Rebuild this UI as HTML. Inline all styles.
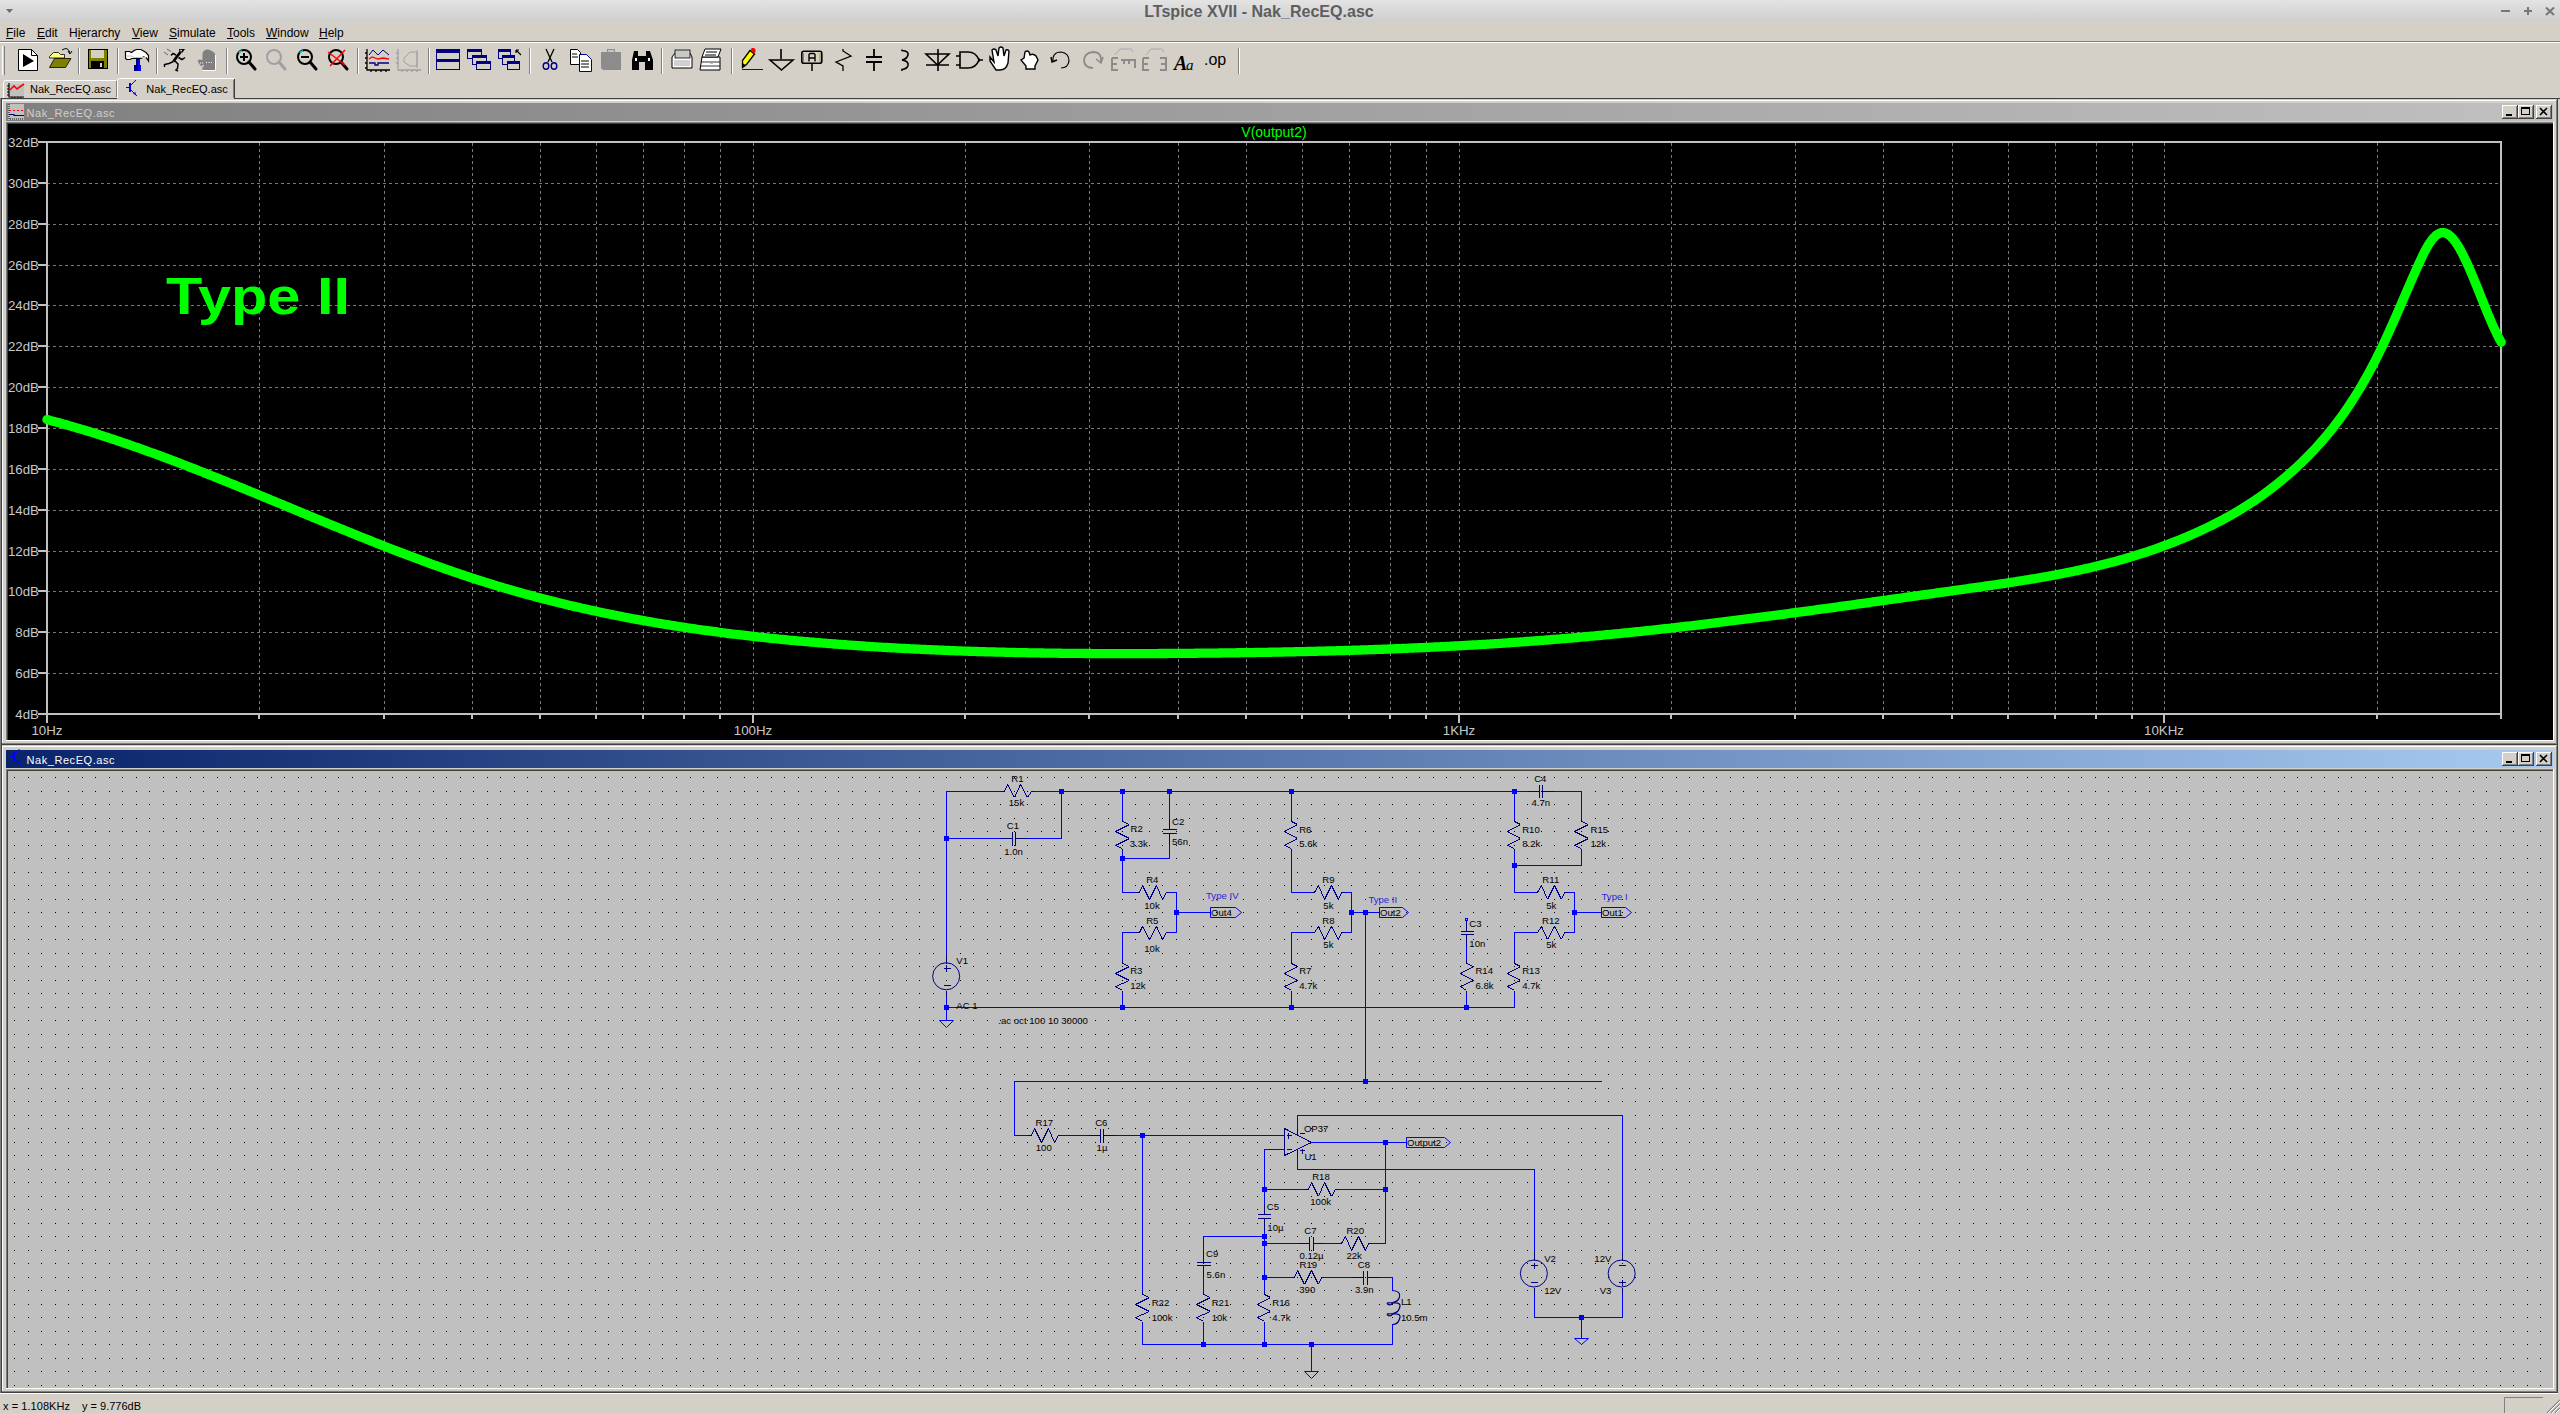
<!DOCTYPE html><html><head><meta charset="utf-8"><title>LTspice XVII - Nak_RecEQ.asc</title><style>
html,body{margin:0;padding:0;width:2560px;height:1413px;overflow:hidden;background:#d4d0c8;font-family:"Liberation Sans", sans-serif;}
.a{position:absolute;}
.mi{position:absolute;top:26px;font-size:12px;color:#000;white-space:nowrap;}
</style></head><body>
<div class="a" style="left:0;top:0;width:2560px;height:22px;background:linear-gradient(#e3e3e3,#cecece);"></div>
<div class="mi" style="left:6px;"><u>F</u>ile</div>
<div class="mi" style="left:37px;"><u>E</u>dit</div>
<div class="mi" style="left:69px;">H<u>i</u>erarchy</div>
<div class="mi" style="left:132px;"><u>V</u>iew</div>
<div class="mi" style="left:169px;"><u>S</u>imulate</div>
<div class="mi" style="left:227px;"><u>T</u>ools</div>
<div class="mi" style="left:266px;"><u>W</u>indow</div>
<div class="mi" style="left:319px;"><u>H</u>elp</div>
<svg class="a" style="left:0;top:0;" width="2560" height="1413" font-family="Liberation Sans, sans-serif">
<path d="M6,9 L13,9 L9.5,13 Z" fill="#6c6c6c"/><text x="1144.2" y="16.8" font-size="16.5" font-weight="bold" fill="#5e5e5e" textLength="229.6" lengthAdjust="spacingAndGlyphs">LTspice XVII - Nak_RecEQ.asc</text><rect x="2501" y="10" width="9" height="2" fill="#777"/><rect x="2524" y="10" width="8" height="2" fill="#777"/><rect x="2527" y="7" width="2" height="8" fill="#777"/><path d="M2546,7.5 L2554,15 M2554,7.5 L2546,15" stroke="#777" stroke-width="2"/><rect x="0" y="41" width="2560" height="1" fill="#808080"/><rect x="0" y="42" width="2560" height="1" fill="#ffffff"/><rect x="2" y="46" width="1" height="29" fill="#fff"/><rect x="4" y="46" width="1" height="29" fill="#808080"/><rect x="78" y="48" width="1" height="26" fill="#808080"/><rect x="79" y="48" width="1" height="26" fill="#fff"/><rect x="117" y="48" width="1" height="26" fill="#808080"/><rect x="118" y="48" width="1" height="26" fill="#fff"/><rect x="156" y="48" width="1" height="26" fill="#808080"/><rect x="157" y="48" width="1" height="26" fill="#fff"/><rect x="226" y="48" width="1" height="26" fill="#808080"/><rect x="227" y="48" width="1" height="26" fill="#fff"/><rect x="357" y="48" width="1" height="26" fill="#808080"/><rect x="358" y="48" width="1" height="26" fill="#fff"/><rect x="428" y="48" width="1" height="26" fill="#808080"/><rect x="429" y="48" width="1" height="26" fill="#fff"/><rect x="529" y="48" width="1" height="26" fill="#808080"/><rect x="530" y="48" width="1" height="26" fill="#fff"/><rect x="661" y="48" width="1" height="26" fill="#808080"/><rect x="662" y="48" width="1" height="26" fill="#fff"/><rect x="731" y="48" width="1" height="26" fill="#808080"/><rect x="732" y="48" width="1" height="26" fill="#fff"/><rect x="1238" y="48" width="1" height="26" fill="#808080"/><rect x="1239" y="48" width="1" height="26" fill="#fff"/><path d="M18.5,49.5 H31.5 L37.5,55.5 V70.5 H18.5 Z" fill="#fff" stroke="#000"/><path d="M31.5,49.5 V55.5 H37.5" fill="none" stroke="#000"/><path d="M23,54 L34,61 L23,67 Z" fill="#000"/><path d="M49.5,56.5 L53.5,52.5 H58.5 L60.5,54.5 H64.5 V58 H49.5 Z" fill="#ffff80" stroke="#000" stroke-width="0.8"/><path d="M49.5,67.5 L54.5,58.5 H71 L65.5,67.5 Z" fill="#808000" stroke="#000" stroke-width="0.8"/><path d="M62,50 Q68,46 70,53 M68,51 L70,54 L72,51" fill="none" stroke="#000" stroke-width="1"/><rect x="88.5" y="49.5" width="19" height="19" fill="#808000" stroke="#000"/><rect x="91" y="50" width="13" height="8" fill="#d4d0c8"/><rect x="91" y="61" width="13" height="7" fill="#000"/><rect x="100" y="63" width="2" height="4" fill="#d4d0c8"/><path d="M125.5,51.5 H129.5 L131.5,52.5 L134,50.5 L136.5,49.5 H141 L146,52.5 L148.5,55.5 V61 L146.5,58 L143.5,57 L141,58.5 H132 L130,59.5 H126.5 L125.5,58 Z" fill="#fff" stroke="#000" stroke-width="1.2"/><path d="M127,56 H132 L134,57.5 H146" stroke="#c0c0c0" fill="none"/><rect x="136" y="59" width="2" height="7" fill="#000080"/><rect x="138" y="59" width="2" height="7" fill="#0000ff"/><rect x="134" y="65" width="4" height="6" fill="#000080"/><rect x="138" y="65" width="3" height="6" fill="#0000ff"/><path d="M180.5,52 L177,56.5 L173.5,61.5" stroke="#000" stroke-width="2.8" fill="none"/><path d="M176,55 L173,53.5 L171,55.5 M178.5,57.5 L182,59.5 L185,57.5 M173.5,61.5 L169,63.5 L164.5,64.5 V67 M175,61 L178,64 L177.5,68.5 L176,70 L178,71" stroke="#000" stroke-width="1.5" fill="none"/><path d="M179,49 H185 L182.5,52.5 H179.5 Z" fill="#000"/><rect x="180.3" y="49.8" width="1.5" height="1.5" fill="#fff"/><path d="M167,49 L171,51.5 M164,52 L168,55" stroke="#808080" stroke-width="1.1" fill="none"/><path d="M202.5,53 Q204,49.5 207,49.5 Q211,49.5 214.5,53 L215.5,55 V70.5 H202.5 V67 L200,65 L197.5,61 L199,59.5 L202.5,60 Z" fill="#808080"/><path d="M215.5,55 V70.5 H202.5" stroke="#fff" fill="none"/><path d="M200,63 h1 M202,63 h1 M206,62.5 h1 M208.5,62.5 h1 M211,62.5 h1 M202,66 h2" stroke="#fff"/><circle cx="244" cy="57" r="7" fill="none" stroke="#000" stroke-width="2"/><path d="M249,62 L255,69" stroke="#000" stroke-width="3" stroke-linecap="round"/><path d="M240,57 H248 M244,53 V61" stroke="#000" stroke-width="2"/><path d="M239,53 Q240,51 242,51" stroke="#00e0e0" stroke-width="1.5" fill="none"/><circle cx="274" cy="57" r="7" fill="none" stroke="#a0a0a0" stroke-width="2"/><path d="M279,62 L285,69" stroke="#a0a0a0" stroke-width="3" stroke-linecap="round"/><circle cx="305" cy="57" r="7" fill="none" stroke="#000" stroke-width="2"/><path d="M310,62 L316,69" stroke="#000" stroke-width="3" stroke-linecap="round"/><path d="M301,57 H309" stroke="#000" stroke-width="2"/><path d="M300,53 Q301,51 303,51" stroke="#00e0e0" stroke-width="1.5" fill="none"/><circle cx="336" cy="57" r="7" fill="none" stroke="#000" stroke-width="2"/><path d="M341,62 L347,69" stroke="#000" stroke-width="3" stroke-linecap="round"/><path d="M328,52 L345,65 M345,50 L330,66" stroke="#ff0000" stroke-width="1.5"/><path d="M367,49 V70 H390 M365,53 H367 M365,58 H367 M365,63 H367 M365,68 H367 M371,70 V72 M376,70 V72 M381,70 V72 M386,70 V72" stroke="#000" stroke-width="1.3" fill="none"/><path d="M369,55 L373,50 L378,55 L383,50 L389,55" stroke="#000080" fill="none"/><path d="M369,59 L372,57 L378,59 L383,58 L389,59" stroke="#f00" fill="none" stroke-width="1.3"/><path d="M369,63 H375 V65 H378 V63 H389" stroke="#000080" fill="none" stroke-width="1.3"/><path d="M398,49 V70 H421 M396,53 H398 M396,58 H398 M396,63 H398 M402,70 V72 M407,70 V72 M412,70 V72 M417,70 V72" stroke="#a0a0a0" stroke-width="1.3" fill="none"/><path d="M404,58 L410,52 H417 V66 L410,66 L404,62 Z M417,50 V68" stroke="#a0a0a0" fill="none"/><rect x="436.5" y="49.5" width="23" height="20" fill="#d4d0c8" stroke="#000080"/><rect x="437" y="50" width="22" height="3" fill="#000080"/><rect x="437" y="59" width="22" height="3" fill="#000080"/><rect x="467.5" y="49.5" width="14" height="9" fill="#d4d0c8" stroke="#000080"/><rect x="467" y="49" width="15" height="3" fill="#000080"/><rect x="472.5" y="55.5" width="14" height="9" fill="#d4d0c8" stroke="#000080"/><rect x="472" y="55" width="15" height="3" fill="#000080"/><rect x="476.5" y="61.5" width="14" height="8" fill="#d4d0c8" stroke="#000080"/><rect x="476" y="61" width="15" height="3" fill="#000080"/><rect x="498.5" y="49.5" width="12" height="9" fill="#d4d0c8" stroke="#000080"/><rect x="498" y="49" width="13" height="3" fill="#000080"/><rect x="502.5" y="55.5" width="12" height="9" fill="#d4d0c8" stroke="#000080"/><rect x="502" y="55" width="13" height="3" fill="#000080"/><rect x="507.5" y="61.5" width="12" height="8" fill="#d4d0c8" stroke="#000080"/><rect x="507" y="61" width="13" height="3" fill="#000080"/><path d="M516,50 L521,55 M516,50 V53 M516,50 H519" stroke="#000" stroke-width="1.2" fill="none"/><path d="M546,49 L552,62 M554,49 L548,62" stroke="#000" stroke-width="1.3"/><ellipse cx="546" cy="66" rx="2.8" ry="3.2" fill="none" stroke="#000080" stroke-width="1.4"/><ellipse cx="554" cy="66" rx="2.8" ry="3.2" fill="none" stroke="#000080" stroke-width="1.4"/><path d="M570.5,49.5 H577.5 L580.5,52.5 V64.5 H570.5 Z" fill="#fff" stroke="#000"/><path d="M579.5,54.5 H586.5 L591.5,59.5 V71.5 H579.5 Z" fill="#fff" stroke="#000080"/><path d="M572,54 H577 M572,57 H578 M581,61 H589 M581,64 H589 M581,67 H589" stroke="#000"/><path d="M601,52 H621 V70 H603 L601,68 Z" fill="#8c8c8c"/><rect x="607" y="49" width="8" height="4" fill="#8c8c8c"/><path d="M608,51 H614" stroke="#fff"/><path d="M632,60 L634,51 H638 V56 H646 V51 H650 L653,60 V70 H645 V62 H639 V70 H632 Z" fill="#000"/><rect x="635" y="58" width="2" height="3" fill="#fff"/><rect x="648" y="58" width="2" height="3" fill="#fff"/><path d="M675,53 H690 L692,57 V68 H672 V57 Z" fill="#fff" stroke="#000"/><rect x="675" y="50" width="15" height="8" fill="#c8c8c8" stroke="#000" stroke-width="0.8"/><rect x="674" y="60" width="16" height="6" fill="#d0d0d0"/><path d="M702,57 H720 V70 H700 Z" fill="#fff" stroke="#000"/><path d="M705,49 H721 L718,57 H702 Z" fill="#fff" stroke="#000"/><path d="M706,52 H717 M705,55 H716" stroke="#000"/><rect x="710" y="63" width="3" height="1" fill="#e0e000"/><path d="M701,62 H720 M701,66 H720" stroke="#000" stroke-width="0.8"/><path d="M742.5,67.5 V60.5 L750,50.5 L754.5,54 L746.5,64.5 Z" fill="#ffff00" stroke="#000" stroke-width="1.3"/><path d="M742.5,67.5 V63 L745.5,65 Z" fill="#000"/><path d="M750.5,49.5 L752,48 H754 L755.5,49.5 V52 L754,53.5 Z" fill="#ff0000"/><path d="M742,69.5 H763" stroke="#0000ff"/><path d="M781,49 V59 M770,60 H793 L781.5,70 Z" fill="none" stroke="#000" stroke-width="1.6"/><rect x="801.8" y="51.2" width="20" height="12" rx="2" fill="#d4d0c8" stroke="#000" stroke-width="1.6"/><path d="M803.5,53 V62 M820,53 V62" stroke="#808000" stroke-width="0.8"/><path d="M809,61.5 V54.5 L810,53.5 H814 L815,54.5 V61.5 M809,58 H815" stroke="#000" stroke-width="1.4" fill="none"/><path d="M812,63 V71" stroke="#000" stroke-width="1.5"/><path d="M843,49 V51 L851,56 L836,62 L843,66 V71" fill="none" stroke="#000" stroke-width="1.3"/><path d="M874,49 V57 M866,57 H882 M866,62 H882 M874,62 V71" fill="none" stroke="#000" stroke-width="1.8"/><path d="M902,49.5 V50.5 Q909,51 908,55 Q907,59 902,60 Q909,61 908,65.5 Q907,69 902,69.5 V71" fill="none" stroke="#000" stroke-width="1.6"/><path d="M938,49 V71 M926,54 H949 L937.5,65 Z M926,65 H949" fill="none" stroke="#000" stroke-width="1.6"/><path d="M960,52 H968 Q976,52 979,60 Q976,68 968,68 H960 Z M956,56 H960 M956,65 H960 M979,60 H983" fill="none" stroke="#000" stroke-width="1.6"/><path d="M978,60 H980" stroke="#000" stroke-width="3"/><path d="M990,57 L994,62 L992,50 Q994,48 996,50 L998,56 L999,48 Q1001,46 1003,48 L1004,56 L1006,50 Q1008,49 1009,51 L1008,63 Q1006,70 1000,70 H996 L990,61 Z" fill="#fff" stroke="#000" stroke-width="1.4"/><path d="M1021,60 L1024,58 L1025,52 Q1027,50 1029,52 L1030,55 Q1033,53 1036,56 L1038,60 L1035,66 V69 H1026 V66 Z" fill="#fff" stroke="#000" stroke-width="1.4"/><path d="M1053,62 Q1052,52 1061,52 Q1069,53 1069,61 Q1068,68 1061,68" fill="none" stroke="#000" stroke-width="1.2"/><path d="M1051,57 L1052,62 L1057,60" fill="none" stroke="#000" stroke-width="1.4"/><path d="M1101,62 Q1102,52 1093,52 Q1084,53 1084,61 Q1085,68 1093,68" fill="none" stroke="#8c8c8c" stroke-width="1.8"/><path d="M1096,59 L1101,63 L1103,57" fill="none" stroke="#8c8c8c" stroke-width="1.6"/><path d="M1112,58 H1118 M1112,58 V70 H1118 M1112,64 H1117 M1121,60 H1135 V68 M1124,60 V64 M1129,60 V64" fill="none" stroke="#8c8c8c" stroke-width="2"/><path d="M1115,55 L1120,49 H1131 L1133,52" fill="none" stroke="#a8a8a8" stroke-width="1"/><path d="M1143,58 H1149 M1143,58 V70 H1149 M1143,64 H1148 M1160,58 H1166 V70 H1160 M1161,64 H1166" fill="none" stroke="#8c8c8c" stroke-width="2"/><path d="M1146,55 L1151,49 H1162 L1164,52" fill="none" stroke="#a8a8a8" stroke-width="1"/><text x="1174" y="70" font-family="Liberation Serif" font-style="italic" font-weight="bold" font-size="20" fill="#000">A</text><text x="1186" y="70" font-family="Liberation Serif" font-style="italic" font-size="15" fill="#000">a</text><text x="1204" y="65" font-family="Liberation Sans" font-size="16" fill="#000">.op</text><path d="M3.5,98 V82.5 Q3.5,80.5 5.5,80.5 H116" fill="none" stroke="#fff"/><rect x="116" y="81" width="1" height="16" fill="#808080"/><path d="M9,83 V97 H24 M7,86 H9 M7,89 H9 M7,92 H9 M7,95 H9 M12,97 V98 M15,97 V98 M18,97 V98 M21,97 V98" stroke="#000" fill="none" stroke-width="1.2"/><rect x="10" y="84" width="14" height="12" fill="#c0c0c0"/><path d="M10,90 L14,86 L17,89 L24,84" stroke="#f00" stroke-width="1.6" fill="none"/><text x="30" y="93" font-size="11.5" fill="#000" textLength="81" lengthAdjust="spacingAndGlyphs">Nak_RecEQ.asc</text><rect x="117" y="78" width="118" height="21" fill="#d4d0c8"/><path d="M117.5,99 V80.5 Q117.5,78.5 119.5,78.5 H234" fill="none" stroke="#fff"/><rect x="234" y="79" width="1" height="19" fill="#404040"/><rect x="233" y="80" width="1" height="18" fill="#808080"/><rect x="129" y="83" width="2" height="9" fill="#0000ff"/><path d="M126,87.5 H129 M131,85 L136,80 M131,90 L137,96" stroke="#0000ff" stroke-width="1" fill="none"/><path d="M133,93.5 L135.5,92 L136,95.5 Z" fill="#0000ff"/><text x="146.3" y="93" font-size="11.5" fill="#000" textLength="81.5" lengthAdjust="spacingAndGlyphs">Nak_RecEQ.asc</text><rect x="0" y="98" width="2560" height="1" fill="#404040"/><rect x="0" y="98" width="1" height="1296" fill="#808080"/><rect x="1" y="98" width="1" height="1295" fill="#404040"/><rect x="0" y="1393" width="2558" height="1" fill="#fff"/><rect x="117" y="98" width="117" height="1" fill="#d4d0c8"/><defs><linearGradient id="gAct" x1="0" x2="1" y1="0" y2="0"><stop offset="0" stop-color="#0a246a"/><stop offset="1" stop-color="#a6caf0"/></linearGradient><linearGradient id="gIn" x1="0" x2="1" y1="0" y2="0"><stop offset="0" stop-color="#808080"/><stop offset="1" stop-color="#c0c0c0"/></linearGradient><clipPath id="plotclip"><rect x="8" y="123" width="2545" height="617"/></clipPath></defs><rect x="2" y="99" width="2556" height="646" fill="#d4d0c8"/><rect x="2" y="100" width="2555" height="1" fill="#fff"/><rect x="2" y="100" width="1" height="644" fill="#fff"/><rect x="2556" y="100" width="1" height="645" fill="#808080"/><rect x="2557" y="99" width="1" height="646" fill="#404040"/><rect x="2" y="743" width="2555" height="1" fill="#808080"/><rect x="2" y="744" width="2556" height="1" fill="#404040"/><rect x="6" y="103" width="2547" height="18" fill="url(#gIn)"/><rect x="2502" y="105" width="16" height="14" fill="#404040"/><rect x="2502" y="105" width="15" height="13" fill="#fff"/><rect x="2503" y="106" width="14" height="12" fill="#808080"/><rect x="2503" y="106" width="13" height="11" fill="#d4d0c8"/><rect x="2506" y="114" width="6" height="2" fill="#000"/><rect x="2518" y="105" width="16" height="14" fill="#404040"/><rect x="2518" y="105" width="15" height="13" fill="#fff"/><rect x="2519" y="106" width="14" height="12" fill="#808080"/><rect x="2519" y="106" width="13" height="11" fill="#d4d0c8"/><rect x="2521.5" y="107.5" width="8" height="7" fill="none" stroke="#000"/><rect x="2521" y="107" width="9" height="2" fill="#000"/><rect x="2536" y="105" width="16" height="14" fill="#404040"/><rect x="2536" y="105" width="15" height="13" fill="#fff"/><rect x="2537" y="106" width="14" height="12" fill="#808080"/><rect x="2537" y="106" width="13" height="11" fill="#d4d0c8"/><path d="M2540,108 L2547,115 M2547,108 L2540,115" stroke="#000" stroke-width="1.6"/><text x="26.5" y="117" font-size="11" fill="#d4d0c8" textLength="88" lengthAdjust="spacing">Nak_RecEQ.asc</text><rect x="8" y="104" width="16" height="16" fill="#c0c0c0"/><path d="M9,104 V119 H24" stroke="#000" stroke-width="1" stroke-dasharray="1,1" fill="none"/><path d="M9,110.5 H24" stroke="#f00" stroke-dasharray="2,2"/><path d="M9,114.5 H14 V115.5 H24" stroke="#000080" stroke-width="1.2" fill="none"/><rect x="6" y="122" width="2548" height="1" fill="#808080"/><rect x="6" y="122" width="1" height="618" fill="#808080"/><rect x="7" y="123" width="1" height="617" fill="#404040"/><rect x="7" y="123" width="2546" height="1" fill="#404040"/><rect x="2553" y="122" width="1" height="619" fill="#fff"/><rect x="6" y="740" width="2548" height="1" fill="#fff"/><rect x="8" y="124" width="2545" height="616" fill="#000"/><path d="M47,183.5 H2500 M47,224.5 H2500 M47,265.5 H2500 M47,305.5 H2500 M47,346.5 H2500 M47,387.5 H2500 M47,428.5 H2500 M47,469.5 H2500 M47,510.5 H2500 M47,551.5 H2500 M47,591.5 H2500 M47,632.5 H2500 M47,673.5 H2500" stroke="#7a7a7a" stroke-width="1" stroke-dasharray="3,3" fill="none"/><path d="M259.5,143 V713 M384.5,143 V713 M472.5,143 V713 M540.5,143 V713 M596.5,143 V713 M643.5,143 V713 M684.5,143 V713 M720.5,143 V713 M753.5,143 V713 M965.5,143 V713 M1089.5,143 V713 M1178.5,143 V713 M1246.5,143 V713 M1302.5,143 V713 M1349.5,143 V713 M1390.5,143 V713 M1426.5,143 V713 M1459.5,143 V713 M1671.5,143 V713 M1795.5,143 V713 M1883.5,143 V713 M1952.5,143 V713 M2008.5,143 V713 M2055.5,143 V713 M2096.5,143 V713 M2132.5,143 V713 M2164.5,143 V713 M2377.5,143 V713" stroke="#7a7a7a" stroke-width="1" stroke-dasharray="3,3" fill="none"/><rect x="46" y="141" width="2456" height="2" fill="#c0c0c0"/><rect x="46" y="141" width="2" height="574" fill="#c0c0c0"/><rect x="46" y="713" width="2456" height="2" fill="#c0c0c0"/><rect x="2500" y="141" width="2" height="574" fill="#c0c0c0"/><rect x="38" y="141" width="9" height="2" fill="#c0c0c0"/><rect x="38" y="182" width="9" height="2" fill="#c0c0c0"/><rect x="38" y="223" width="9" height="2" fill="#c0c0c0"/><rect x="38" y="264" width="9" height="2" fill="#c0c0c0"/><rect x="38" y="304" width="9" height="2" fill="#c0c0c0"/><rect x="38" y="345" width="9" height="2" fill="#c0c0c0"/><rect x="38" y="386" width="9" height="2" fill="#c0c0c0"/><rect x="38" y="427" width="9" height="2" fill="#c0c0c0"/><rect x="38" y="468" width="9" height="2" fill="#c0c0c0"/><rect x="38" y="509" width="9" height="2" fill="#c0c0c0"/><rect x="38" y="550" width="9" height="2" fill="#c0c0c0"/><rect x="38" y="590" width="9" height="2" fill="#c0c0c0"/><rect x="38" y="631" width="9" height="2" fill="#c0c0c0"/><rect x="38" y="672" width="9" height="2" fill="#c0c0c0"/><rect x="38" y="713" width="9" height="2" fill="#c0c0c0"/><rect x="258" y="715" width="2" height="4" fill="#c0c0c0"/><rect x="383" y="715" width="2" height="4" fill="#c0c0c0"/><rect x="471" y="715" width="2" height="4" fill="#c0c0c0"/><rect x="539" y="715" width="2" height="4" fill="#c0c0c0"/><rect x="595" y="715" width="2" height="4" fill="#c0c0c0"/><rect x="642" y="715" width="2" height="4" fill="#c0c0c0"/><rect x="683" y="715" width="2" height="4" fill="#c0c0c0"/><rect x="719" y="715" width="2" height="4" fill="#c0c0c0"/><rect x="964" y="715" width="2" height="4" fill="#c0c0c0"/><rect x="1088" y="715" width="2" height="4" fill="#c0c0c0"/><rect x="1177" y="715" width="2" height="4" fill="#c0c0c0"/><rect x="1245" y="715" width="2" height="4" fill="#c0c0c0"/><rect x="1301" y="715" width="2" height="4" fill="#c0c0c0"/><rect x="1348" y="715" width="2" height="4" fill="#c0c0c0"/><rect x="1389" y="715" width="2" height="4" fill="#c0c0c0"/><rect x="1425" y="715" width="2" height="4" fill="#c0c0c0"/><rect x="1670" y="715" width="2" height="4" fill="#c0c0c0"/><rect x="1794" y="715" width="2" height="4" fill="#c0c0c0"/><rect x="1882" y="715" width="2" height="4" fill="#c0c0c0"/><rect x="1951" y="715" width="2" height="4" fill="#c0c0c0"/><rect x="2007" y="715" width="2" height="4" fill="#c0c0c0"/><rect x="2054" y="715" width="2" height="4" fill="#c0c0c0"/><rect x="2095" y="715" width="2" height="4" fill="#c0c0c0"/><rect x="2131" y="715" width="2" height="4" fill="#c0c0c0"/><rect x="2376" y="715" width="2" height="4" fill="#c0c0c0"/><rect x="752" y="715" width="2" height="8" fill="#c0c0c0"/><rect x="1458" y="715" width="2" height="8" fill="#c0c0c0"/><rect x="2163" y="715" width="2" height="8" fill="#c0c0c0"/><rect x="46" y="715" width="2" height="8" fill="#c0c0c0"/><rect x="2500" y="715" width="2" height="4" fill="#c0c0c0"/><g font-size="13.3" fill="#c8c8c8" font-family="Liberation Sans"><text x="39" y="147" text-anchor="end">32dB</text><text x="39" y="188" text-anchor="end">30dB</text><text x="39" y="229" text-anchor="end">28dB</text><text x="39" y="270" text-anchor="end">26dB</text><text x="39" y="310" text-anchor="end">24dB</text><text x="39" y="351" text-anchor="end">22dB</text><text x="39" y="392" text-anchor="end">20dB</text><text x="39" y="433" text-anchor="end">18dB</text><text x="39" y="474" text-anchor="end">16dB</text><text x="39" y="515" text-anchor="end">14dB</text><text x="39" y="556" text-anchor="end">12dB</text><text x="39" y="596" text-anchor="end">10dB</text><text x="39" y="637" text-anchor="end">8dB</text><text x="39" y="678" text-anchor="end">6dB</text><text x="39" y="719" text-anchor="end">4dB</text><text x="47" y="735" text-anchor="middle">10Hz</text><text x="753" y="735" text-anchor="middle">100Hz</text><text x="1459" y="735" text-anchor="middle">1KHz</text><text x="2164" y="735" text-anchor="middle">10KHz</text></g><text x="1274" y="137" font-size="14" fill="#00ff00" text-anchor="middle">V(output2)</text><text x="166" y="314" font-size="51.5" font-weight="bold" fill="#00ff00" textLength="184" lengthAdjust="spacingAndGlyphs">Type II</text><g clip-path="url(#plotclip)"><polyline points="47.0,419.60 49.0,420.12 51.0,420.65 53.0,421.18 55.0,421.71 57.0,422.25 59.0,422.80 61.0,423.35 63.0,423.91 65.0,424.47 67.0,425.03 69.0,425.60 71.0,426.18 73.0,426.75 75.0,427.34 77.0,427.93 79.0,428.52 81.0,429.12 83.0,429.72 85.0,430.32 87.0,430.93 89.0,431.55 91.0,432.17 93.0,432.79 95.0,433.42 97.0,434.05 99.0,434.68 101.0,435.32 103.0,435.97 105.0,436.61 107.0,437.27 109.0,437.92 111.0,438.58 113.0,439.24 115.0,439.91 117.0,440.58 119.0,441.25 121.0,441.93 123.0,442.61 125.0,443.30 127.0,443.98 129.0,444.67 131.0,445.37 133.0,446.07 135.0,446.77 137.0,447.47 139.0,448.18 141.0,448.89 143.0,449.61 145.0,450.32 147.0,451.05 149.0,451.77 151.0,452.50 153.0,453.22 155.0,453.96 157.0,454.69 159.0,455.43 161.0,456.17 163.0,456.91 165.0,457.66 167.0,458.41 169.0,459.16 171.0,459.91 173.0,460.67 175.0,461.43 177.0,462.19 179.0,462.96 181.0,463.72 183.0,464.49 185.0,465.26 187.0,466.03 189.0,466.81 191.0,467.59 193.0,468.36 195.0,469.15 197.0,469.93 199.0,470.71 201.0,471.50 203.0,472.29 205.0,473.08 207.0,473.87 209.0,474.67 211.0,475.47 213.0,476.26 215.0,477.06 217.0,477.86 219.0,478.67 221.0,479.47 223.0,480.28 225.0,481.08 227.0,481.89 229.0,482.70 231.0,483.51 233.0,484.32 235.0,485.14 237.0,485.95 239.0,486.77 241.0,487.58 243.0,488.40 245.0,489.22 247.0,490.04 249.0,490.86 251.0,491.68 253.0,492.50 255.0,493.33 257.0,494.15 259.0,494.97 261.0,495.80 263.0,496.63 265.0,497.45 267.0,498.28 269.0,499.11 271.0,499.93 273.0,500.76 275.0,501.59 277.0,502.42 279.0,503.25 281.0,504.08 283.0,504.91 285.0,505.74 287.0,506.57 289.0,507.40 291.0,508.23 293.0,509.06 295.0,509.88 297.0,510.71 299.0,511.54 301.0,512.37 303.0,513.20 305.0,514.03 307.0,514.86 309.0,515.69 311.0,516.51 313.0,517.34 315.0,518.17 317.0,518.99 319.0,519.82 321.0,520.64 323.0,521.47 325.0,522.29 327.0,523.12 329.0,523.94 331.0,524.76 333.0,525.58 335.0,526.40 337.0,527.22 339.0,528.03 341.0,528.85 343.0,529.67 345.0,530.48 347.0,531.29 349.0,532.10 351.0,532.92 353.0,533.72 355.0,534.53 357.0,535.34 359.0,536.14 361.0,536.95 363.0,537.75 365.0,538.55 367.0,539.35 369.0,540.15 371.0,540.94 373.0,541.74 375.0,542.53 377.0,543.32 379.0,544.11 381.0,544.89 383.0,545.68 385.0,546.46 387.0,547.24 389.0,548.02 391.0,548.80 393.0,549.57 395.0,550.34 397.0,551.11 399.0,551.88 401.0,552.65 403.0,553.41 405.0,554.17 407.0,554.93 409.0,555.69 411.0,556.44 413.0,557.19 415.0,557.94 417.0,558.68 419.0,559.43 421.0,560.17 423.0,560.90 425.0,561.64 427.0,562.37 429.0,563.10 431.0,563.82 433.0,564.55 435.0,565.27 437.0,565.98 439.0,566.70 441.0,567.41 443.0,568.11 445.0,568.82 447.0,569.52 449.0,570.21 451.0,570.91 453.0,571.60 455.0,572.29 457.0,572.97 459.0,573.65 461.0,574.33 463.0,575.00 465.0,575.67 467.0,576.33 469.0,577.00 471.0,577.65 473.0,578.31 475.0,578.96 477.0,579.60 479.0,580.25 481.0,580.88 483.0,581.52 485.0,582.15 487.0,582.78 489.0,583.40 491.0,584.02 493.0,584.63 495.0,585.24 497.0,585.85 499.0,586.45 501.0,587.05 503.0,587.64 505.0,588.23 507.0,588.82 509.0,589.41 511.0,589.98 513.0,590.56 515.0,591.13 517.0,591.70 519.0,592.27 521.0,592.83 523.0,593.38 525.0,593.94 527.0,594.49 529.0,595.03 531.0,595.57 533.0,596.11 535.0,596.65 537.0,597.18 539.0,597.71 541.0,598.23 543.0,598.75 545.0,599.27 547.0,599.78 549.0,600.29 551.0,600.80 553.0,601.30 555.0,601.80 557.0,602.30 559.0,602.79 561.0,603.28 563.0,603.76 565.0,604.24 567.0,604.72 569.0,605.20 571.0,605.67 573.0,606.14 575.0,606.60 577.0,607.07 579.0,607.52 581.0,607.98 583.0,608.43 585.0,608.88 587.0,609.33 589.0,609.77 591.0,610.21 593.0,610.64 595.0,611.07 597.0,611.50 599.0,611.93 601.0,612.35 603.0,612.77 605.0,613.19 607.0,613.60 609.0,614.01 611.0,614.42 613.0,614.83 615.0,615.23 617.0,615.62 619.0,616.02 621.0,616.41 623.0,616.80 625.0,617.19 627.0,617.57 629.0,617.95 631.0,618.33 633.0,618.70 635.0,619.07 637.0,619.44 639.0,619.81 641.0,620.17 643.0,620.53 645.0,620.89 647.0,621.24 649.0,621.59 651.0,621.94 653.0,622.29 655.0,622.63 657.0,622.97 659.0,623.31 661.0,623.65 663.0,623.98 665.0,624.31 667.0,624.63 669.0,624.96 671.0,625.28 673.0,625.60 675.0,625.91 677.0,626.23 679.0,626.54 681.0,626.85 683.0,627.15 685.0,627.46 687.0,627.76 689.0,628.06 691.0,628.35 693.0,628.65 695.0,628.94 697.0,629.23 699.0,629.51 701.0,629.79 703.0,630.08 705.0,630.35 707.0,630.63 709.0,630.90 711.0,631.18 713.0,631.45 715.0,631.71 717.0,631.98 719.0,632.24 721.0,632.50 723.0,632.76 725.0,633.01 727.0,633.27 729.0,633.52 731.0,633.77 733.0,634.01 735.0,634.26 737.0,634.50 739.0,634.74 741.0,634.98 743.0,635.21 745.0,635.45 747.0,635.68 749.0,635.91 751.0,636.13 753.0,636.36 755.0,636.58 757.0,636.81 759.0,637.02 761.0,637.24 763.0,637.46 765.0,637.67 767.0,637.88 769.0,638.09 771.0,638.30 773.0,638.50 775.0,638.71 777.0,638.91 779.0,639.11 781.0,639.31 783.0,639.50 785.0,639.70 787.0,639.89 789.0,640.08 791.0,640.27 793.0,640.46 795.0,640.64 797.0,640.83 799.0,641.01 801.0,641.19 803.0,641.37 805.0,641.55 807.0,641.72 809.0,641.90 811.0,642.07 813.0,642.24 815.0,642.41 817.0,642.58 819.0,642.74 821.0,642.91 823.0,643.07 825.0,643.23 827.0,643.39 829.0,643.55 831.0,643.70 833.0,643.86 835.0,644.01 837.0,644.16 839.0,644.32 841.0,644.46 843.0,644.61 845.0,644.76 847.0,644.90 849.0,645.05 851.0,645.19 853.0,645.33 855.0,645.47 857.0,645.61 859.0,645.74 861.0,645.88 863.0,646.01 865.0,646.14 867.0,646.27 869.0,646.40 871.0,646.53 873.0,646.66 875.0,646.78 877.0,646.91 879.0,647.03 881.0,647.15 883.0,647.27 885.0,647.39 887.0,647.51 889.0,647.62 891.0,647.74 893.0,647.85 895.0,647.96 897.0,648.07 899.0,648.18 901.0,648.29 903.0,648.40 905.0,648.50 907.0,648.61 909.0,648.71 911.0,648.81 913.0,648.91 915.0,649.01 917.0,649.11 919.0,649.20 921.0,649.30 923.0,649.39 925.0,649.49 927.0,649.58 929.0,649.67 931.0,649.76 933.0,649.85 935.0,649.93 937.0,650.02 939.0,650.10 941.0,650.19 943.0,650.27 945.0,650.35 947.0,650.43 949.0,650.51 951.0,650.59 953.0,650.66 955.0,650.74 957.0,650.81 959.0,650.89 961.0,650.96 963.0,651.03 965.0,651.10 967.0,651.17 969.0,651.23 971.0,651.30 973.0,651.37 975.0,651.43 977.0,651.49 979.0,651.56 981.0,651.62 983.0,651.68 985.0,651.74 987.0,651.79 989.0,651.85 991.0,651.91 993.0,651.96 995.0,652.02 997.0,652.07 999.0,652.12 1001.0,652.17 1003.0,652.22 1005.0,652.27 1007.0,652.32 1009.0,652.36 1011.0,652.41 1013.0,652.46 1015.0,652.50 1017.0,652.54 1019.0,652.59 1021.0,652.63 1023.0,652.67 1025.0,652.71 1027.0,652.74 1029.0,652.78 1031.0,652.82 1033.0,652.85 1035.0,652.89 1037.0,652.92 1039.0,652.96 1041.0,652.99 1043.0,653.02 1045.0,653.05 1047.0,653.08 1049.0,653.11 1051.0,653.13 1053.0,653.16 1055.0,653.19 1057.0,653.21 1059.0,653.24 1061.0,653.26 1063.0,653.28 1065.0,653.31 1067.0,653.33 1069.0,653.35 1071.0,653.37 1073.0,653.38 1075.0,653.40 1077.0,653.42 1079.0,653.44 1081.0,653.45 1083.0,653.47 1085.0,653.48 1087.0,653.49 1089.0,653.51 1091.0,653.52 1093.0,653.53 1095.0,653.54 1097.0,653.55 1099.0,653.56 1101.0,653.57 1103.0,653.57 1105.0,653.58 1107.0,653.59 1109.0,653.59 1111.0,653.60 1113.0,653.60 1115.0,653.60 1117.0,653.61 1119.0,653.61 1121.0,653.61 1123.0,653.61 1125.0,653.61 1127.0,653.61 1129.0,653.61 1131.0,653.61 1133.0,653.61 1135.0,653.60 1137.0,653.60 1139.0,653.60 1141.0,653.59 1143.0,653.59 1145.0,653.58 1147.0,653.57 1149.0,653.57 1151.0,653.56 1153.0,653.55 1155.0,653.54 1157.0,653.53 1159.0,653.52 1161.0,653.51 1163.0,653.50 1165.0,653.49 1167.0,653.48 1169.0,653.46 1171.0,653.45 1173.0,653.44 1175.0,653.42 1177.0,653.41 1179.0,653.39 1181.0,653.38 1183.0,653.36 1185.0,653.35 1187.0,653.33 1189.0,653.31 1191.0,653.30 1193.0,653.28 1195.0,653.26 1197.0,653.24 1199.0,653.22 1201.0,653.20 1203.0,653.18 1205.0,653.16 1207.0,653.14 1209.0,653.12 1211.0,653.09 1213.0,653.07 1215.0,653.05 1217.0,653.03 1219.0,653.00 1221.0,652.98 1223.0,652.95 1225.0,652.93 1227.0,652.90 1229.0,652.88 1231.0,652.85 1233.0,652.83 1235.0,652.80 1237.0,652.77 1239.0,652.74 1241.0,652.72 1243.0,652.69 1245.0,652.66 1247.0,652.63 1249.0,652.60 1251.0,652.57 1253.0,652.54 1255.0,652.50 1257.0,652.47 1259.0,652.44 1261.0,652.41 1263.0,652.37 1265.0,652.34 1267.0,652.30 1269.0,652.27 1271.0,652.23 1273.0,652.20 1275.0,652.16 1277.0,652.12 1279.0,652.08 1281.0,652.05 1283.0,652.01 1285.0,651.97 1287.0,651.93 1289.0,651.89 1291.0,651.84 1293.0,651.80 1295.0,651.76 1297.0,651.72 1299.0,651.67 1301.0,651.63 1303.0,651.58 1305.0,651.54 1307.0,651.49 1309.0,651.44 1311.0,651.40 1313.0,651.35 1315.0,651.30 1317.0,651.25 1319.0,651.20 1321.0,651.15 1323.0,651.10 1325.0,651.05 1327.0,650.99 1329.0,650.94 1331.0,650.89 1333.0,650.83 1335.0,650.78 1337.0,650.72 1339.0,650.66 1341.0,650.61 1343.0,650.55 1345.0,650.49 1347.0,650.43 1349.0,650.37 1351.0,650.31 1353.0,650.25 1355.0,650.18 1357.0,650.12 1359.0,650.06 1361.0,649.99 1363.0,649.92 1365.0,649.86 1367.0,649.79 1369.0,649.72 1371.0,649.65 1373.0,649.59 1375.0,649.51 1377.0,649.44 1379.0,649.37 1381.0,649.30 1383.0,649.23 1385.0,649.15 1387.0,649.08 1389.0,649.00 1391.0,648.92 1393.0,648.85 1395.0,648.77 1397.0,648.69 1399.0,648.61 1401.0,648.53 1403.0,648.45 1405.0,648.36 1407.0,648.28 1409.0,648.20 1411.0,648.11 1413.0,648.02 1415.0,647.94 1417.0,647.85 1419.0,647.76 1421.0,647.67 1423.0,647.58 1425.0,647.49 1427.0,647.40 1429.0,647.30 1431.0,647.21 1433.0,647.11 1435.0,647.02 1437.0,646.92 1439.0,646.82 1441.0,646.72 1443.0,646.62 1445.0,646.52 1447.0,646.42 1449.0,646.32 1451.0,646.21 1453.0,646.11 1455.0,646.00 1457.0,645.90 1459.0,645.79 1461.0,645.68 1463.0,645.57 1465.0,645.46 1467.0,645.35 1469.0,645.23 1471.0,645.12 1473.0,645.01 1475.0,644.89 1477.0,644.77 1479.0,644.65 1481.0,644.54 1483.0,644.42 1485.0,644.29 1487.0,644.17 1489.0,644.05 1491.0,643.92 1493.0,643.80 1495.0,643.67 1497.0,643.55 1499.0,643.42 1501.0,643.29 1503.0,643.16 1505.0,643.02 1507.0,642.89 1509.0,642.76 1511.0,642.62 1513.0,642.48 1515.0,642.35 1517.0,642.21 1519.0,642.07 1521.0,641.93 1523.0,641.79 1525.0,641.64 1527.0,641.50 1529.0,641.35 1531.0,641.21 1533.0,641.06 1535.0,640.91 1537.0,640.76 1539.0,640.61 1541.0,640.45 1543.0,640.30 1545.0,640.14 1547.0,639.99 1549.0,639.83 1551.0,639.67 1553.0,639.51 1555.0,639.35 1557.0,639.19 1559.0,639.02 1561.0,638.86 1563.0,638.69 1565.0,638.53 1567.0,638.36 1569.0,638.19 1571.0,638.02 1573.0,637.84 1575.0,637.67 1577.0,637.50 1579.0,637.32 1581.0,637.14 1583.0,636.97 1585.0,636.79 1587.0,636.61 1589.0,636.42 1591.0,636.24 1593.0,636.06 1595.0,635.87 1597.0,635.69 1599.0,635.50 1601.0,635.31 1603.0,635.12 1605.0,634.93 1607.0,634.74 1609.0,634.54 1611.0,634.35 1613.0,634.16 1615.0,633.96 1617.0,633.76 1619.0,633.56 1621.0,633.36 1623.0,633.16 1625.0,632.96 1627.0,632.76 1629.0,632.56 1631.0,632.35 1633.0,632.15 1635.0,631.94 1637.0,631.73 1639.0,631.52 1641.0,631.31 1643.0,631.10 1645.0,630.89 1647.0,630.68 1649.0,630.47 1651.0,630.25 1653.0,630.04 1655.0,629.82 1657.0,629.60 1659.0,629.38 1661.0,629.16 1663.0,628.94 1665.0,628.72 1667.0,628.50 1669.0,628.28 1671.0,628.05 1673.0,627.83 1675.0,627.60 1677.0,627.38 1679.0,627.15 1681.0,626.92 1683.0,626.69 1685.0,626.46 1687.0,626.23 1689.0,626.00 1691.0,625.77 1693.0,625.54 1695.0,625.30 1697.0,625.07 1699.0,624.83 1701.0,624.60 1703.0,624.36 1705.0,624.12 1707.0,623.88 1709.0,623.64 1711.0,623.40 1713.0,623.16 1715.0,622.92 1717.0,622.68 1719.0,622.43 1721.0,622.19 1723.0,621.94 1725.0,621.70 1727.0,621.45 1729.0,621.21 1731.0,620.96 1733.0,620.71 1735.0,620.46 1737.0,620.21 1739.0,619.96 1741.0,619.71 1743.0,619.46 1745.0,619.21 1747.0,618.95 1749.0,618.70 1751.0,618.44 1753.0,618.19 1755.0,617.93 1757.0,617.68 1759.0,617.42 1761.0,617.16 1763.0,616.91 1765.0,616.65 1767.0,616.39 1769.0,616.13 1771.0,615.87 1773.0,615.61 1775.0,615.34 1777.0,615.08 1779.0,614.82 1781.0,614.56 1783.0,614.29 1785.0,614.03 1787.0,613.76 1789.0,613.50 1791.0,613.23 1793.0,612.97 1795.0,612.70 1797.0,612.43 1799.0,612.17 1801.0,611.90 1803.0,611.63 1805.0,611.36 1807.0,611.09 1809.0,610.82 1811.0,610.55 1813.0,610.28 1815.0,610.01 1817.0,609.73 1819.0,609.46 1821.0,609.19 1823.0,608.92 1825.0,608.64 1827.0,608.37 1829.0,608.09 1831.0,607.82 1833.0,607.55 1835.0,607.27 1837.0,606.99 1839.0,606.72 1841.0,606.44 1843.0,606.17 1845.0,605.89 1847.0,605.61 1849.0,605.33 1851.0,605.06 1853.0,604.78 1855.0,604.50 1857.0,604.22 1859.0,603.94 1861.0,603.66 1863.0,603.38 1865.0,603.10 1867.0,602.82 1869.0,602.54 1871.0,602.26 1873.0,601.98 1875.0,601.70 1877.0,601.42 1879.0,601.14 1881.0,600.86 1883.0,600.58 1885.0,600.30 1887.0,600.01 1889.0,599.73 1891.0,599.45 1893.0,599.17 1895.0,598.89 1897.0,598.60 1899.0,598.32 1901.0,598.04 1903.0,597.76 1905.0,597.48 1907.0,597.19 1909.0,596.91 1911.0,596.63 1913.0,596.35 1915.0,596.06 1917.0,595.78 1919.0,595.50 1921.0,595.22 1923.0,594.93 1925.0,594.65 1927.0,594.37 1929.0,594.09 1931.0,593.80 1933.0,593.52 1935.0,593.24 1937.0,592.96 1939.0,592.68 1941.0,592.40 1943.0,592.11 1945.0,591.83 1947.0,591.55 1949.0,591.27 1951.0,590.99 1953.0,590.71 1955.0,590.43 1957.0,590.15 1959.0,589.87 1961.0,589.59 1963.0,589.31 1965.0,589.03 1967.0,588.75 1969.0,588.47 1971.0,588.18 1973.0,587.90 1975.0,587.62 1977.0,587.34 1979.0,587.06 1981.0,586.78 1983.0,586.49 1985.0,586.21 1987.0,585.92 1989.0,585.64 1991.0,585.35 1993.0,585.06 1995.0,584.77 1997.0,584.48 1999.0,584.19 2001.0,583.89 2003.0,583.59 2005.0,583.30 2007.0,583.00 2009.0,582.69 2011.0,582.39 2013.0,582.08 2015.0,581.77 2017.0,581.46 2019.0,581.15 2021.0,580.83 2023.0,580.52 2025.0,580.20 2027.0,579.87 2029.0,579.54 2031.0,579.21 2033.0,578.88 2035.0,578.55 2037.0,578.21 2039.0,577.86 2041.0,577.52 2043.0,577.17 2045.0,576.81 2047.0,576.46 2049.0,576.10 2051.0,575.73 2053.0,575.36 2055.0,574.99 2057.0,574.61 2059.0,574.23 2061.0,573.85 2063.0,573.46 2065.0,573.06 2067.0,572.66 2069.0,572.26 2071.0,571.85 2073.0,571.43 2075.0,571.02 2077.0,570.59 2079.0,570.16 2081.0,569.73 2083.0,569.29 2085.0,568.84 2087.0,568.39 2089.0,567.94 2091.0,567.47 2093.0,567.00 2095.0,566.53 2097.0,566.05 2099.0,565.56 2101.0,565.07 2103.0,564.57 2105.0,564.07 2107.0,563.56 2109.0,563.04 2111.0,562.51 2113.0,561.98 2115.0,561.44 2117.0,560.90 2119.0,560.34 2121.0,559.78 2123.0,559.22 2125.0,558.64 2127.0,558.06 2129.0,557.47 2131.0,556.88 2133.0,556.27 2135.0,555.66 2137.0,555.04 2139.0,554.41 2141.0,553.77 2143.0,553.13 2145.0,552.48 2147.0,551.82 2149.0,551.15 2151.0,550.47 2153.0,549.78 2155.0,549.09 2157.0,548.38 2159.0,547.67 2161.0,546.95 2163.0,546.22 2165.0,545.48 2167.0,544.73 2169.0,543.97 2171.0,543.20 2173.0,542.42 2175.0,541.64 2177.0,540.84 2179.0,540.03 2181.0,539.21 2183.0,538.39 2185.0,537.55 2187.0,536.70 2189.0,535.85 2191.0,534.98 2193.0,534.10 2195.0,533.21 2197.0,532.31 2199.0,531.40 2201.0,530.48 2203.0,529.55 2205.0,528.60 2207.0,527.65 2209.0,526.68 2211.0,525.70 2213.0,524.71 2215.0,523.70 2217.0,522.68 2219.0,521.65 2221.0,520.60 2223.0,519.54 2225.0,518.47 2227.0,517.37 2229.0,516.27 2231.0,515.14 2233.0,514.00 2235.0,512.85 2237.0,511.67 2239.0,510.48 2241.0,509.27 2243.0,508.05 2245.0,506.80 2247.0,505.54 2249.0,504.25 2251.0,502.95 2253.0,501.63 2255.0,500.29 2257.0,498.92 2259.0,497.54 2261.0,496.14 2263.0,494.71 2265.0,493.26 2267.0,491.79 2269.0,490.30 2271.0,488.78 2273.0,487.24 2275.0,485.68 2277.0,484.09 2279.0,482.48 2281.0,480.84 2283.0,479.18 2285.0,477.50 2287.0,475.78 2289.0,474.05 2291.0,472.28 2293.0,470.49 2295.0,468.67 2297.0,466.82 2299.0,464.95 2301.0,463.05 2303.0,461.12 2305.0,459.15 2307.0,457.16 2309.0,455.13 2311.0,453.07 2313.0,450.98 2315.0,448.84 2317.0,446.67 2319.0,444.46 2321.0,442.21 2323.0,439.91 2325.0,437.58 2327.0,435.19 2329.0,432.76 2331.0,430.29 2333.0,427.76 2335.0,425.19 2337.0,422.56 2339.0,419.88 2341.0,417.14 2343.0,414.35 2345.0,411.51 2347.0,408.60 2349.0,405.64 2351.0,402.61 2353.0,399.53 2355.0,396.38 2357.0,393.16 2359.0,389.88 2361.0,386.53 2363.0,383.12 2365.0,379.63 2367.0,376.07 2369.0,372.44 2371.0,368.73 2373.0,364.95 2375.0,361.10 2377.0,357.16 2379.0,353.15 2381.0,349.05 2383.0,344.88 2385.0,340.62 2387.0,336.29 2389.0,331.89 2391.0,327.43 2393.0,322.93 2395.0,318.38 2397.0,313.80 2399.0,309.19 2401.0,304.56 2403.0,299.93 2405.0,295.29 2407.0,290.66 2409.0,286.04 2411.0,281.45 2413.0,276.89 2415.0,272.36 2417.0,267.88 2419.0,263.46 2421.0,259.13 2423.0,254.94 2425.0,250.98 2427.0,247.30 2429.0,243.97 2431.0,241.02 2433.0,238.46 2435.0,236.34 2437.0,234.66 2439.0,233.45 2441.0,232.74 2443.0,232.54 2445.0,232.87 2447.0,233.69 2449.0,234.99 2451.0,236.73 2453.0,238.88 2455.0,241.43 2457.0,244.32 2459.0,247.55 2461.0,251.09 2463.0,254.89 2465.0,258.95 2467.0,263.22 2469.0,267.68 2471.0,272.30 2473.0,277.05 2475.0,281.91 2477.0,286.85 2479.0,291.84 2481.0,296.85 2483.0,301.85 2485.0,306.82 2487.0,311.72 2489.0,316.54 2491.0,321.23 2493.0,325.77 2495.0,330.14 2497.0,334.31 2499.0,338.25 2501.2,342.27" fill="none" stroke="#00ff00" stroke-width="9.3" stroke-linejoin="round" stroke-linecap="round"/></g><rect x="2" y="745" width="2556" height="648" fill="#d4d0c8"/><rect x="2" y="746" width="2555" height="1" fill="#fff"/><rect x="2" y="746" width="1" height="646" fill="#fff"/><rect x="2556" y="746" width="1" height="647" fill="#808080"/><rect x="2557" y="745" width="1" height="648" fill="#404040"/><rect x="2" y="1391" width="2555" height="1" fill="#808080"/><rect x="2" y="1392" width="2556" height="1" fill="#404040"/><rect x="6" y="750" width="2547" height="18" fill="url(#gAct)"/><rect x="2502" y="752" width="16" height="14" fill="#404040"/><rect x="2502" y="752" width="15" height="13" fill="#fff"/><rect x="2503" y="753" width="14" height="12" fill="#808080"/><rect x="2503" y="753" width="13" height="11" fill="#d4d0c8"/><rect x="2506" y="761" width="6" height="2" fill="#000"/><rect x="2518" y="752" width="16" height="14" fill="#404040"/><rect x="2518" y="752" width="15" height="13" fill="#fff"/><rect x="2519" y="753" width="14" height="12" fill="#808080"/><rect x="2519" y="753" width="13" height="11" fill="#d4d0c8"/><rect x="2521.5" y="754.5" width="8" height="7" fill="none" stroke="#000"/><rect x="2521" y="754" width="9" height="2" fill="#000"/><rect x="2536" y="752" width="16" height="14" fill="#404040"/><rect x="2536" y="752" width="15" height="13" fill="#fff"/><rect x="2537" y="753" width="14" height="12" fill="#808080"/><rect x="2537" y="753" width="13" height="11" fill="#d4d0c8"/><path d="M2540,755 L2547,762 M2547,755 L2540,762" stroke="#000" stroke-width="1.6"/><rect x="13" y="752" width="2" height="9" fill="#0000ff"/><path d="M10,756.5 H13 M15,754 L19.5,749 M15,759.5 L20.5,765" stroke="#0000ff" stroke-width="1" fill="none"/><path d="M17,763 L19.5,761 L19,764 Z" fill="#0000ff"/><text x="26.5" y="764" font-size="11" fill="#ffffff" textLength="88" lengthAdjust="spacing">Nak_RecEQ.asc</text><rect x="6" y="769" width="2548" height="1" fill="#808080"/><rect x="6" y="769" width="1" height="619" fill="#808080"/><rect x="7" y="770" width="1" height="618" fill="#404040"/><rect x="7" y="770" width="2546" height="1" fill="#404040"/><rect x="2553" y="769" width="1" height="620" fill="#fff"/><rect x="6" y="1388" width="2548" height="1" fill="#fff"/><rect x="8" y="771" width="2545" height="617" fill="#c0c0c0"/><defs><path id="dotrow" d="M14,0h1v1h-1zM28,0h1v1h-1zM41,0h1v1h-1zM55,0h1v1h-1zM68,0h1v1h-1zM82,0h1v1h-1zM95,0h1v1h-1zM109,0h1v1h-1zM122,0h1v1h-1zM136,0h1v1h-1zM149,0h1v1h-1zM163,0h1v1h-1zM176,0h1v1h-1zM190,0h1v1h-1zM203,0h1v1h-1zM217,0h1v1h-1zM230,0h1v1h-1zM244,0h1v1h-1zM257,0h1v1h-1zM271,0h1v1h-1zM284,0h1v1h-1zM298,0h1v1h-1zM311,0h1v1h-1zM325,0h1v1h-1zM338,0h1v1h-1zM352,0h1v1h-1zM365,0h1v1h-1zM379,0h1v1h-1zM392,0h1v1h-1zM406,0h1v1h-1zM419,0h1v1h-1zM433,0h1v1h-1zM446,0h1v1h-1zM460,0h1v1h-1zM473,0h1v1h-1zM487,0h1v1h-1zM500,0h1v1h-1zM514,0h1v1h-1zM527,0h1v1h-1zM541,0h1v1h-1zM554,0h1v1h-1zM568,0h1v1h-1zM581,0h1v1h-1zM595,0h1v1h-1zM608,0h1v1h-1zM622,0h1v1h-1zM635,0h1v1h-1zM649,0h1v1h-1zM662,0h1v1h-1zM676,0h1v1h-1zM690,0h1v1h-1zM703,0h1v1h-1zM717,0h1v1h-1zM730,0h1v1h-1zM744,0h1v1h-1zM757,0h1v1h-1zM771,0h1v1h-1zM784,0h1v1h-1zM798,0h1v1h-1zM811,0h1v1h-1zM825,0h1v1h-1zM838,0h1v1h-1zM852,0h1v1h-1zM865,0h1v1h-1zM879,0h1v1h-1zM892,0h1v1h-1zM906,0h1v1h-1zM919,0h1v1h-1zM933,0h1v1h-1zM946,0h1v1h-1zM960,0h1v1h-1zM973,0h1v1h-1zM987,0h1v1h-1zM1000,0h1v1h-1zM1014,0h1v1h-1zM1027,0h1v1h-1zM1041,0h1v1h-1zM1054,0h1v1h-1zM1068,0h1v1h-1zM1081,0h1v1h-1zM1095,0h1v1h-1zM1108,0h1v1h-1zM1122,0h1v1h-1zM1135,0h1v1h-1zM1149,0h1v1h-1zM1162,0h1v1h-1zM1176,0h1v1h-1zM1189,0h1v1h-1zM1203,0h1v1h-1zM1216,0h1v1h-1zM1230,0h1v1h-1zM1243,0h1v1h-1zM1257,0h1v1h-1zM1270,0h1v1h-1zM1284,0h1v1h-1zM1297,0h1v1h-1zM1311,0h1v1h-1zM1324,0h1v1h-1zM1338,0h1v1h-1zM1351,0h1v1h-1zM1365,0h1v1h-1zM1379,0h1v1h-1zM1392,0h1v1h-1zM1406,0h1v1h-1zM1419,0h1v1h-1zM1433,0h1v1h-1zM1446,0h1v1h-1zM1460,0h1v1h-1zM1473,0h1v1h-1zM1487,0h1v1h-1zM1500,0h1v1h-1zM1514,0h1v1h-1zM1527,0h1v1h-1zM1541,0h1v1h-1zM1554,0h1v1h-1zM1568,0h1v1h-1zM1581,0h1v1h-1zM1595,0h1v1h-1zM1608,0h1v1h-1zM1622,0h1v1h-1zM1635,0h1v1h-1zM1649,0h1v1h-1zM1662,0h1v1h-1zM1676,0h1v1h-1zM1689,0h1v1h-1zM1703,0h1v1h-1zM1716,0h1v1h-1zM1730,0h1v1h-1zM1743,0h1v1h-1zM1757,0h1v1h-1zM1770,0h1v1h-1zM1784,0h1v1h-1zM1797,0h1v1h-1zM1811,0h1v1h-1zM1824,0h1v1h-1zM1838,0h1v1h-1zM1851,0h1v1h-1zM1865,0h1v1h-1zM1878,0h1v1h-1zM1892,0h1v1h-1zM1905,0h1v1h-1zM1919,0h1v1h-1zM1932,0h1v1h-1zM1946,0h1v1h-1zM1959,0h1v1h-1zM1973,0h1v1h-1zM1986,0h1v1h-1zM2000,0h1v1h-1zM2013,0h1v1h-1zM2027,0h1v1h-1zM2041,0h1v1h-1zM2054,0h1v1h-1zM2068,0h1v1h-1zM2081,0h1v1h-1zM2095,0h1v1h-1zM2108,0h1v1h-1zM2122,0h1v1h-1zM2135,0h1v1h-1zM2149,0h1v1h-1zM2162,0h1v1h-1zM2176,0h1v1h-1zM2189,0h1v1h-1zM2203,0h1v1h-1zM2216,0h1v1h-1zM2230,0h1v1h-1zM2243,0h1v1h-1zM2257,0h1v1h-1zM2270,0h1v1h-1zM2284,0h1v1h-1zM2297,0h1v1h-1zM2311,0h1v1h-1zM2324,0h1v1h-1zM2338,0h1v1h-1zM2351,0h1v1h-1zM2365,0h1v1h-1zM2378,0h1v1h-1zM2392,0h1v1h-1zM2405,0h1v1h-1zM2419,0h1v1h-1zM2432,0h1v1h-1zM2446,0h1v1h-1zM2459,0h1v1h-1zM2473,0h1v1h-1zM2486,0h1v1h-1zM2500,0h1v1h-1zM2513,0h1v1h-1zM2527,0h1v1h-1zM2540,0h1v1h-1z" fill="#000"/></defs><use href="#dotrow" y="777"/><use href="#dotrow" y="791"/><use href="#dotrow" y="804"/><use href="#dotrow" y="818"/><use href="#dotrow" y="831"/><use href="#dotrow" y="845"/><use href="#dotrow" y="858"/><use href="#dotrow" y="872"/><use href="#dotrow" y="885"/><use href="#dotrow" y="899"/><use href="#dotrow" y="912"/><use href="#dotrow" y="926"/><use href="#dotrow" y="939"/><use href="#dotrow" y="953"/><use href="#dotrow" y="966"/><use href="#dotrow" y="980"/><use href="#dotrow" y="993"/><use href="#dotrow" y="1007"/><use href="#dotrow" y="1020"/><use href="#dotrow" y="1034"/><use href="#dotrow" y="1047"/><use href="#dotrow" y="1061"/><use href="#dotrow" y="1074"/><use href="#dotrow" y="1088"/><use href="#dotrow" y="1101"/><use href="#dotrow" y="1115"/><use href="#dotrow" y="1128"/><use href="#dotrow" y="1142"/><use href="#dotrow" y="1155"/><use href="#dotrow" y="1169"/><use href="#dotrow" y="1182"/><use href="#dotrow" y="1196"/><use href="#dotrow" y="1209"/><use href="#dotrow" y="1223"/><use href="#dotrow" y="1236"/><use href="#dotrow" y="1250"/><use href="#dotrow" y="1263"/><use href="#dotrow" y="1277"/><use href="#dotrow" y="1290"/><use href="#dotrow" y="1304"/><use href="#dotrow" y="1317"/><use href="#dotrow" y="1331"/><use href="#dotrow" y="1344"/><use href="#dotrow" y="1358"/><use href="#dotrow" y="1371"/><use href="#dotrow" y="1385"/><g shape-rendering="crispEdges"><path d="M1000.50,791.50 L1004.50,791.50 M1004.50,791.50 L1007.50,784.50 M1007.50,784.50 L1014.50,797.50 M1014.50,797.50 L1020.50,784.50 M1020.50,784.50 L1027.50,797.50 M1027.50,797.50 L1031.50,791.50 M1031.50,791.50 L1034.50,791.50 M1527.50,791.50 L1539.50,791.50 M1539.50,784.50 L1539.50,797.50 M1542.50,784.50 L1542.50,797.50 M1542.50,791.50 L1554.50,791.50 M1000.50,838.50 L1012.50,838.50 M1012.50,831.50 L1012.50,845.50 M1015.50,831.50 L1015.50,845.50 M1015.50,838.50 L1027.50,838.50 M1122.50,818.50 L1122.50,821.50 M1122.50,821.50 L1129.50,824.50 M1129.50,824.50 L1115.50,831.50 M1115.50,831.50 L1129.50,838.50 M1129.50,838.50 L1115.50,845.50 M1115.50,845.50 L1122.50,848.50 M1122.50,848.50 L1122.50,851.50 M1169.50,818.50 L1169.50,829.50 M1162.50,829.50 L1176.50,829.50 M1162.50,833.50 L1176.50,833.50 M1169.50,833.50 L1169.50,845.50 M1135.50,892.50 L1139.50,892.50 M1139.50,892.50 L1142.50,885.50 M1142.50,885.50 L1149.50,899.50 M1149.50,899.50 L1156.50,885.50 M1156.50,885.50 L1162.50,899.50 M1162.50,899.50 L1166.50,892.50 M1166.50,892.50 L1169.50,892.50 M1135.50,932.50 L1139.50,932.50 M1139.50,932.50 L1142.50,926.50 M1142.50,926.50 L1149.50,939.50 M1149.50,939.50 L1156.50,926.50 M1156.50,926.50 L1162.50,939.50 M1162.50,939.50 L1166.50,932.50 M1166.50,932.50 L1169.50,932.50 M1122.50,959.50 L1122.50,963.50 M1122.50,963.50 L1129.50,966.50 M1129.50,966.50 L1115.50,973.50 M1115.50,973.50 L1129.50,980.50 M1129.50,980.50 L1115.50,986.50 M1115.50,986.50 L1122.50,990.50 M1122.50,990.50 L1122.50,993.50 M946.50,953.50 L946.50,963.50 M946.50,990.50 L946.50,997.50 M943.50,968.50 L950.50,968.50 M946.50,964.50 L946.50,971.50 M943.50,985.50 L950.50,985.50 M1291.50,818.50 L1291.50,821.50 M1291.50,821.50 L1297.50,824.50 M1297.50,824.50 L1284.50,831.50 M1284.50,831.50 L1297.50,838.50 M1297.50,838.50 L1284.50,845.50 M1284.50,845.50 L1291.50,848.50 M1291.50,848.50 L1291.50,851.50 M1311.50,892.50 L1314.50,892.50 M1314.50,892.50 L1318.50,885.50 M1318.50,885.50 L1324.50,899.50 M1324.50,899.50 L1331.50,885.50 M1331.50,885.50 L1338.50,899.50 M1338.50,899.50 L1341.50,892.50 M1341.50,892.50 L1345.50,892.50 M1311.50,932.50 L1314.50,932.50 M1314.50,932.50 L1318.50,926.50 M1318.50,926.50 L1324.50,939.50 M1324.50,939.50 L1331.50,926.50 M1331.50,926.50 L1338.50,939.50 M1338.50,939.50 L1341.50,932.50 M1341.50,932.50 L1345.50,932.50 M1291.50,959.50 L1291.50,963.50 M1291.50,963.50 L1297.50,966.50 M1297.50,966.50 L1284.50,973.50 M1284.50,973.50 L1297.50,980.50 M1297.50,980.50 L1284.50,986.50 M1284.50,986.50 L1291.50,990.50 M1291.50,990.50 L1291.50,993.50 M1466.50,919.50 L1466.50,931.50 M1460.50,931.50 L1473.50,931.50 M1460.50,934.50 L1473.50,934.50 M1466.50,934.50 L1466.50,946.50 M1466.50,959.50 L1466.50,963.50 M1466.50,963.50 L1473.50,966.50 M1473.50,966.50 L1460.50,973.50 M1460.50,973.50 L1473.50,980.50 M1473.50,980.50 L1460.50,986.50 M1460.50,986.50 L1466.50,990.50 M1466.50,990.50 L1466.50,993.50 M1514.50,818.50 L1514.50,821.50 M1514.50,821.50 L1520.50,824.50 M1520.50,824.50 L1507.50,831.50 M1507.50,831.50 L1520.50,838.50 M1520.50,838.50 L1507.50,845.50 M1507.50,845.50 L1514.50,848.50 M1514.50,848.50 L1514.50,851.50 M1581.50,818.50 L1581.50,821.50 M1581.50,821.50 L1588.50,824.50 M1588.50,824.50 L1574.50,831.50 M1574.50,831.50 L1588.50,838.50 M1588.50,838.50 L1574.50,845.50 M1574.50,845.50 L1581.50,848.50 M1581.50,848.50 L1581.50,851.50 M1534.50,892.50 L1537.50,892.50 M1537.50,892.50 L1541.50,885.50 M1541.50,885.50 L1547.50,899.50 M1547.50,899.50 L1554.50,885.50 M1554.50,885.50 L1561.50,899.50 M1561.50,899.50 L1564.50,892.50 M1564.50,892.50 L1568.50,892.50 M1534.50,932.50 L1537.50,932.50 M1537.50,932.50 L1541.50,926.50 M1541.50,926.50 L1547.50,939.50 M1547.50,939.50 L1554.50,926.50 M1554.50,926.50 L1561.50,939.50 M1561.50,939.50 L1564.50,932.50 M1564.50,932.50 L1568.50,932.50 M1514.50,959.50 L1514.50,963.50 M1514.50,963.50 L1520.50,966.50 M1520.50,966.50 L1507.50,973.50 M1507.50,973.50 L1520.50,980.50 M1520.50,980.50 L1507.50,986.50 M1507.50,986.50 L1514.50,990.50 M1514.50,990.50 L1514.50,993.50 M1027.50,1135.50 L1031.50,1135.50 M1031.50,1135.50 L1034.50,1128.50 M1034.50,1128.50 L1041.50,1142.50 M1041.50,1142.50 L1048.50,1128.50 M1048.50,1128.50 L1054.50,1142.50 M1054.50,1142.50 L1058.50,1135.50 M1058.50,1135.50 L1061.50,1135.50 M1088.50,1135.50 L1100.50,1135.50 M1100.50,1128.50 L1100.50,1142.50 M1103.50,1128.50 L1103.50,1142.50 M1103.50,1135.50 L1115.50,1135.50 M1142.50,1290.50 L1142.50,1294.50 M1142.50,1294.50 L1149.50,1297.50 M1149.50,1297.50 L1135.50,1304.50 M1135.50,1304.50 L1149.50,1311.50 M1149.50,1311.50 L1135.50,1317.50 M1135.50,1317.50 L1142.50,1321.50 M1142.50,1321.50 L1142.50,1324.50 M1284.50,1128.50 L1311.50,1142.50 M1311.50,1142.50 L1284.50,1155.50 M1284.50,1128.50 L1284.50,1155.50 M1297.50,1135.50 L1297.50,1128.50 M1297.50,1149.50 L1297.50,1155.50 M1286.50,1135.50 L1291.50,1135.50 M1288.50,1132.50 L1288.50,1138.50 M1286.50,1149.50 L1291.50,1149.50 M1299.50,1133.50 L1304.50,1133.50 M1299.50,1150.50 L1304.50,1150.50 M1302.50,1148.50 L1302.50,1153.50 M1304.50,1189.50 L1308.50,1189.50 M1308.50,1189.50 L1311.50,1182.50 M1311.50,1182.50 L1318.50,1196.50 M1318.50,1196.50 L1324.50,1182.50 M1324.50,1182.50 L1331.50,1196.50 M1331.50,1196.50 L1335.50,1189.50 M1335.50,1189.50 L1338.50,1189.50 M1264.50,1203.50 L1264.50,1214.50 M1257.50,1214.50 L1270.50,1214.50 M1257.50,1218.50 L1270.50,1218.50 M1264.50,1218.50 L1264.50,1230.50 M1203.50,1250.50 L1203.50,1262.50 M1196.50,1262.50 L1210.50,1262.50 M1196.50,1265.50 L1210.50,1265.50 M1203.50,1265.50 L1203.50,1277.50 M1203.50,1290.50 L1203.50,1294.50 M1203.50,1294.50 L1210.50,1297.50 M1210.50,1297.50 L1196.50,1304.50 M1196.50,1304.50 L1210.50,1311.50 M1210.50,1311.50 L1196.50,1317.50 M1196.50,1317.50 L1203.50,1321.50 M1203.50,1321.50 L1203.50,1324.50 M1264.50,1290.50 L1264.50,1294.50 M1264.50,1294.50 L1270.50,1297.50 M1270.50,1297.50 L1257.50,1304.50 M1257.50,1304.50 L1270.50,1311.50 M1270.50,1311.50 L1257.50,1317.50 M1257.50,1317.50 L1264.50,1321.50 M1264.50,1321.50 L1264.50,1324.50 M1297.50,1243.50 L1309.50,1243.50 M1309.50,1236.50 L1309.50,1250.50 M1313.50,1236.50 L1313.50,1250.50 M1313.50,1243.50 L1324.50,1243.50 M1338.50,1243.50 L1341.50,1243.50 M1341.50,1243.50 L1345.50,1236.50 M1345.50,1236.50 L1351.50,1250.50 M1351.50,1250.50 L1358.50,1236.50 M1358.50,1236.50 L1365.50,1250.50 M1365.50,1250.50 L1368.50,1243.50 M1368.50,1243.50 L1372.50,1243.50 M1291.50,1277.50 L1294.50,1277.50 M1294.50,1277.50 L1297.50,1270.50 M1297.50,1270.50 L1304.50,1284.50 M1304.50,1284.50 L1311.50,1270.50 M1311.50,1270.50 L1318.50,1284.50 M1318.50,1284.50 L1321.50,1277.50 M1321.50,1277.50 L1324.50,1277.50 M1351.50,1277.50 L1363.50,1277.50 M1363.50,1270.50 L1363.50,1284.50 M1367.50,1270.50 L1367.50,1284.50 M1367.50,1277.50 L1379.50,1277.50 M1534.50,1250.50 L1534.50,1260.50 M1534.50,1287.50 L1534.50,1294.50 M1530.50,1265.50 L1537.50,1265.50 M1534.50,1262.50 L1534.50,1268.50 M1530.50,1282.50 L1537.50,1282.50 M1622.50,1250.50 L1622.50,1260.50 M1622.50,1287.50 L1622.50,1294.50 M1618.50,1265.50 L1625.50,1265.50 M1618.50,1282.50 L1625.50,1282.50 M1622.50,1279.50 L1622.50,1285.50" stroke="#000080" stroke-width="1" fill="none"/></g><circle cx="946.19" cy="976.27" r="13.51" fill="none" stroke="#000080" stroke-width="1"/><circle cx="1533.88" cy="1273.49" r="13.51" fill="none" stroke="#000080" stroke-width="1"/><circle cx="1621.69" cy="1273.49" r="13.51" fill="none" stroke="#000080" stroke-width="1"/><path d="M939.5,1020.5 L953.5,1020.5 L946.5,1027.5 Z M1304.5,1371.5 L1318.5,1371.5 L1311.5,1378.5 Z M1574.5,1338.5 L1588.5,1338.5 L1581.5,1344.5 Z" stroke="#0000ff" stroke-width="1" fill="none"/><path d="M1392.5,1290.5 Q1401,1291 1399.5,1297 Q1398,1302 1392.5,1302.5 Q1386,1302.5 1387.5,1304 Q1390,1306 1393,1303 Q1402,1302 1399.5,1308 Q1398,1313 1392.5,1313.5 Q1386,1313.5 1387.5,1315 Q1390,1317 1393,1314 Q1402,1313 1399.5,1319 Q1398,1324.5 1392.5,1324.5" fill="none" stroke="#000080" stroke-width="1.2"/><path d="M946,791 h55 v1 h-55 z M1034,791 h481 v1 h-481 z M1514,791 h14 v1 h-14 z M1554,791 h28 v1 h-28 z M1581,791 h1 v28 h-1 z M946,791 h1 v163 h-1 z M946,838 h55 v1 h-55 z M1027,838 h35 v1 h-35 z M1061,791 h1 v48 h-1 z M1122,791 h1 v28 h-1 z M1122,851 h1 v8 h-1 z M1169,791 h1 v28 h-1 z M1169,845 h1 v14 h-1 z M1122,858 h48 v1 h-48 z M1122,858 h1 v35 h-1 z M1122,892 h14 v1 h-14 z M1169,892 h8 v1 h-8 z M1176,892 h1 v41 h-1 z M1169,932 h8 v1 h-8 z M1122,932 h14 v1 h-14 z M1122,932 h1 v28 h-1 z M1122,993 h1 v15 h-1 z M1176,912 h35 v1 h-35 z M946,997 h1 v24 h-1 z M946,1007 h569 v1 h-569 z M1514,993 h1 v15 h-1 z M1291,791 h1 v28 h-1 z M1291,851 h1 v42 h-1 z M1291,892 h21 v1 h-21 z M1345,892 h7 v1 h-7 z M1351,892 h1 v41 h-1 z M1345,932 h7 v1 h-7 z M1291,932 h21 v1 h-21 z M1291,932 h1 v28 h-1 z M1291,993 h1 v15 h-1 z M1351,912 h29 v1 h-29 z M1365,912 h1 v170 h-1 z M1466,946 h1 v14 h-1 z M1466,993 h1 v15 h-1 z M1514,791 h1 v28 h-1 z M1514,851 h1 v42 h-1 z M1514,892 h21 v1 h-21 z M1581,851 h1 v15 h-1 z M1514,865 h68 v1 h-68 z M1568,892 h7 v1 h-7 z M1574,892 h1 v41 h-1 z M1568,932 h7 v1 h-7 z M1514,932 h21 v1 h-21 z M1514,932 h1 v28 h-1 z M1574,912 h28 v1 h-28 z M1014,1081 h588 v1 h-588 z M1014,1081 h1 v55 h-1 z M1014,1135 h14 v1 h-14 z M1061,1135 h28 v1 h-28 z M1115,1135 h170 v1 h-170 z M1142,1135 h1 v156 h-1 z M1142,1324 h1 v21 h-1 z M1142,1344 h251 v1 h-251 z M1392,1324 h1 v21 h-1 z M1311,1344 h1 v28 h-1 z M1297,1115 h1 v14 h-1 z M1297,1115 h326 v1 h-326 z M1622,1115 h1 v136 h-1 z M1297,1155 h1 v15 h-1 z M1297,1169 h238 v1 h-238 z M1534,1169 h1 v82 h-1 z M1311,1142 h96 v1 h-96 z M1385,1142 h1 v102 h-1 z M1372,1243 h14 v1 h-14 z M1264,1149 h21 v1 h-21 z M1264,1149 h1 v55 h-1 z M1264,1189 h41 v1 h-41 z M1338,1189 h48 v1 h-48 z M1264,1230 h1 v61 h-1 z M1203,1236 h62 v1 h-62 z M1203,1236 h1 v15 h-1 z M1203,1277 h1 v14 h-1 z M1203,1324 h1 v21 h-1 z M1264,1324 h1 v21 h-1 z M1264,1243 h34 v1 h-34 z M1324,1243 h15 v1 h-15 z M1264,1277 h28 v1 h-28 z M1324,1277 h28 v1 h-28 z M1379,1277 h14 v1 h-14 z M1392,1277 h1 v14 h-1 z M1534,1294 h1 v24 h-1 z M1534,1317 h89 v1 h-89 z M1622,1294 h1 v24 h-1 z M1581,1317 h1 v22 h-1 z" fill="#0000ff"/><path d="M1059,789 h5 v5 h-5 z M1120,789 h5 v5 h-5 z M1167,789 h5 v5 h-5 z M1289,789 h5 v5 h-5 z M1512,789 h5 v5 h-5 z M944,836 h5 v5 h-5 z M1120,856 h5 v5 h-5 z M1174,910 h5 v5 h-5 z M1120,1005 h5 v5 h-5 z M944,1005 h5 v5 h-5 z M1289,1005 h5 v5 h-5 z M1464,1005 h5 v5 h-5 z M1349,910 h5 v5 h-5 z M1363,910 h5 v5 h-5 z M1363,1079 h5 v5 h-5 z M1512,863 h5 v5 h-5 z M1572,910 h5 v5 h-5 z M1140,1133 h5 v5 h-5 z M1201,1342 h5 v5 h-5 z M1262,1342 h5 v5 h-5 z M1309,1342 h5 v5 h-5 z M1383,1140 h5 v5 h-5 z M1383,1187 h5 v5 h-5 z M1262,1187 h5 v5 h-5 z M1262,1234 h5 v5 h-5 z M1262,1241 h5 v5 h-5 z M1262,1275 h5 v5 h-5 z M1579,1315 h5 v5 h-5 z" fill="#0000ff"/><rect x="1465.5" y="918.5" width="2" height="2" fill="none" stroke="#0000ff"/><path d="M1210.5,907.5 H1235.5 L1241.5,912.5 L1235.5,917.5 H1210.5 Z" fill="none" stroke="#0000ff"/><path d="M1379.5,907.5 H1402.5 L1408.5,912.5 L1402.5,917.5 H1379.5 Z" fill="none" stroke="#0000ff"/><path d="M1601.5,907.5 H1625.5 L1631.5,912.5 L1625.5,917.5 H1601.5 Z" fill="none" stroke="#0000ff"/><path d="M1406.5,1137.5 H1444.5 L1450.5,1142.5 L1444.5,1147.5 H1406.5 Z" fill="none" stroke="#0000ff"/><g font-size="9.6" font-family="Liberation Sans"><text x="1211.0" y="915.6" fill="#000" text-anchor="start">Out4</text><text x="1380.0" y="915.6" fill="#000" text-anchor="start">Out2</text><text x="1602.0" y="915.6" fill="#000" text-anchor="start">Out1</text><text x="1407.0" y="1145.6" fill="#000" text-anchor="start">Output2</text><text x="1017.5" y="782.4" fill="#000" text-anchor="middle">R1</text><text x="1016.5" y="805.9" fill="#000" text-anchor="middle">15k</text><text x="1013.0" y="829.4" fill="#000" text-anchor="middle">C1</text><text x="1013.6" y="854.6" fill="#000" text-anchor="middle">1.0n</text><text x="1130.6" y="832.2" fill="#000" text-anchor="start">R2</text><text x="1129.7" y="847.1" fill="#000" text-anchor="start">3.3k</text><text x="1172.0" y="825.2" fill="#000" text-anchor="start">C2</text><text x="1172.0" y="845.2" fill="#000" text-anchor="start">56n</text><text x="1152.3" y="883.2" fill="#000" text-anchor="middle">R4</text><text x="1152.0" y="908.6" fill="#000" text-anchor="middle">10k</text><text x="1152.3" y="924.3" fill="#000" text-anchor="middle">R5</text><text x="1152.0" y="952.4" fill="#000" text-anchor="middle">10k</text><text x="1130.2" y="974.0" fill="#000" text-anchor="start">R3</text><text x="1130.2" y="989.3" fill="#000" text-anchor="start">12k</text><text x="956.3" y="963.5" fill="#000" text-anchor="start">V1</text><text x="956.3" y="1009.0" fill="#000" text-anchor="start">AC 1</text><text x="998.3" y="1024.2" fill="#000" text-anchor="start">.ac oct 100 10 30000</text><text x="1299.2" y="832.6" fill="#000" text-anchor="start">R6</text><text x="1299.2" y="847.3" fill="#000" text-anchor="start">5.6k</text><text x="1328.4" y="883.3" fill="#000" text-anchor="middle">R9</text><text x="1328.4" y="908.6" fill="#000" text-anchor="middle">5k</text><text x="1328.4" y="924.3" fill="#000" text-anchor="middle">R8</text><text x="1328.4" y="948.2" fill="#000" text-anchor="middle">5k</text><text x="1299.2" y="974.0" fill="#000" text-anchor="start">R7</text><text x="1299.2" y="989.3" fill="#000" text-anchor="start">4.7k</text><text x="1469.3" y="926.8" fill="#000" text-anchor="start">C3</text><text x="1469.3" y="947.3" fill="#000" text-anchor="start">10n</text><text x="1475.4" y="974.0" fill="#000" text-anchor="start">R14</text><text x="1475.4" y="989.3" fill="#000" text-anchor="start">6.8k</text><text x="1522.2" y="832.6" fill="#000" text-anchor="start">R10</text><text x="1522.2" y="847.3" fill="#000" text-anchor="start">8.2k</text><text x="1590.6" y="832.6" fill="#000" text-anchor="start">R15</text><text x="1590.6" y="847.3" fill="#000" text-anchor="start">12k</text><text x="1540.3" y="782.0" fill="#000" text-anchor="middle">C4</text><text x="1540.8" y="806.4" fill="#000" text-anchor="middle">4.7n</text><text x="1550.8" y="883.3" fill="#000" text-anchor="middle">R11</text><text x="1551.2" y="908.6" fill="#000" text-anchor="middle">5k</text><text x="1550.8" y="924.3" fill="#000" text-anchor="middle">R12</text><text x="1551.2" y="948.2" fill="#000" text-anchor="middle">5k</text><text x="1522.2" y="974.0" fill="#000" text-anchor="start">R13</text><text x="1522.2" y="989.3" fill="#000" text-anchor="start">4.7k</text><text x="1044.3" y="1126.0" fill="#000" text-anchor="middle">R17</text><text x="1043.8" y="1151.3" fill="#000" text-anchor="middle">100</text><text x="1101.3" y="1126.0" fill="#000" text-anchor="middle">C6</text><text x="1102.0" y="1151.3" fill="#000" text-anchor="middle">1µ</text><text x="1303.9" y="1132.3" fill="#000" text-anchor="start">OP37</text><text x="1304.4" y="1159.6" fill="#000" text-anchor="start">U1</text><text x="1321.0" y="1180.4" fill="#000" text-anchor="middle">R18</text><text x="1320.7" y="1205.2" fill="#000" text-anchor="middle">100k</text><text x="1266.8" y="1210.1" fill="#000" text-anchor="start">C5</text><text x="1267.3" y="1231.0" fill="#000" text-anchor="start">10µ</text><text x="1310.4" y="1234.3" fill="#000" text-anchor="middle">C7</text><text x="1311.5" y="1259.2" fill="#000" text-anchor="middle">0.12µ</text><text x="1355.2" y="1234.3" fill="#000" text-anchor="middle">R20</text><text x="1354.2" y="1259.2" fill="#000" text-anchor="middle">22k</text><text x="1308.3" y="1268.3" fill="#000" text-anchor="middle">R19</text><text x="1307.3" y="1293.2" fill="#000" text-anchor="middle">390</text><text x="1364.0" y="1268.3" fill="#000" text-anchor="middle">C8</text><text x="1364.3" y="1293.2" fill="#000" text-anchor="middle">3.9n</text><text x="1400.9" y="1305.4" fill="#000" text-anchor="start">L1</text><text x="1400.9" y="1321.3" fill="#000" text-anchor="start">10.5m</text><text x="1206.0" y="1257.4" fill="#000" text-anchor="start">C9</text><text x="1206.6" y="1278.3" fill="#000" text-anchor="start">5.6n</text><text x="1151.7" y="1305.5" fill="#000" text-anchor="start">R22</text><text x="1151.7" y="1320.8" fill="#000" text-anchor="start">100k</text><text x="1211.7" y="1305.5" fill="#000" text-anchor="start">R21</text><text x="1211.7" y="1320.8" fill="#000" text-anchor="start">10k</text><text x="1272.3" y="1305.5" fill="#000" text-anchor="start">R16</text><text x="1272.3" y="1320.8" fill="#000" text-anchor="start">4.7k</text><text x="1544.2" y="1261.8" fill="#000" text-anchor="start">V2</text><text x="1544.2" y="1294.3" fill="#000" text-anchor="start">12V</text><text x="1611.4" y="1261.8" fill="#000" text-anchor="end">12V</text><text x="1611.4" y="1294.3" fill="#000" text-anchor="end">V3</text><text x="1206.0" y="899.1" fill="#2828d8" text-anchor="start">Type IV</text><text x="1368.4" y="903.3" fill="#2828d8" text-anchor="start">Type II</text><text x="1601.5" y="899.5" fill="#2828d8" text-anchor="start">Type I</text></g><text x="3" y="1409.5" font-size="11" fill="#000" textLength="67" lengthAdjust="spacing">x = 1.108KHz</text><text x="82" y="1409.5" font-size="11" fill="#000" textLength="59" lengthAdjust="spacing">y = 9.776dB</text><path d="M2504.5,1413 V1397.5 H2543" stroke="#808080" fill="none"/><path d="M2547,1413 L2560,1400 M2551,1413 L2560,1404 M2555,1413 L2560,1408" stroke="#808080" stroke-width="1.2"/><path d="M2548,1413 L2560,1401 M2552,1413 L2560,1405 M2556,1413 L2560,1409" stroke="#fff" stroke-width="1"/>
</svg>
</body></html>
